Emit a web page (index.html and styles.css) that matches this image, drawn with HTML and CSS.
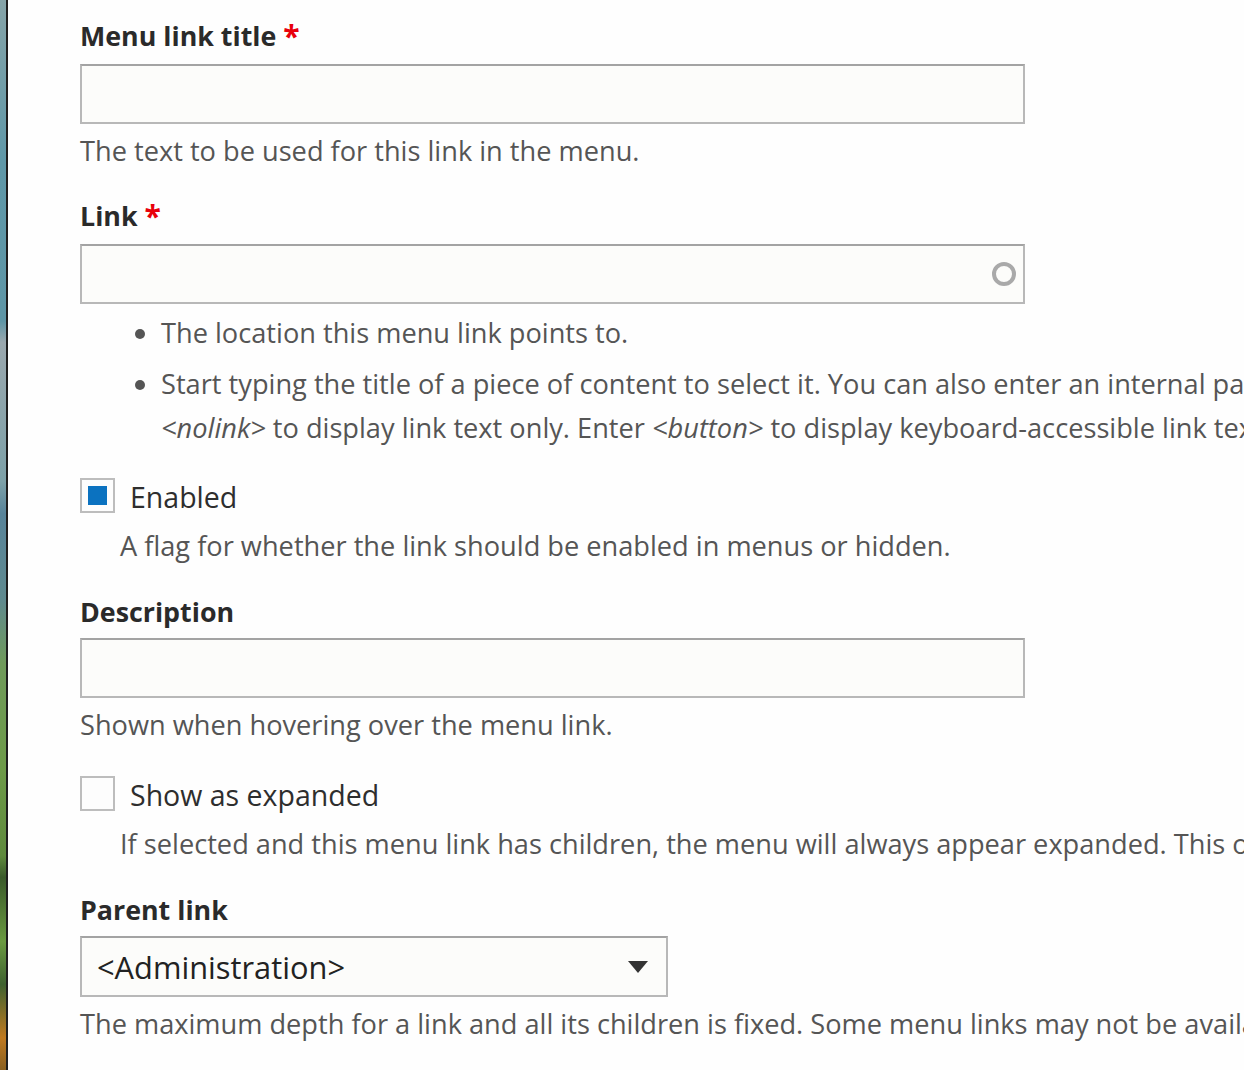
FILE: index.html
```html
<!DOCTYPE html>
<html>
<head>
<meta charset="utf-8">
<link rel="stylesheet" href="styles.css">
</head>
<body>
<div class="page">
  <div class="strip"></div>
  <main class="content">
    <div class="form-item">
      <label class="label">Menu link title <span class="req">*</span></label>
      <div class="input"></div>
      <div class="desc">The text to be used for this link in the menu.</div>
    </div>

    <div class="form-item">
      <label class="label">Link <span class="req">*</span></label>
      <div class="input input-auto">
        <svg class="spinner" width="30" height="30" viewBox="0 0 30 30"><circle cx="15" cy="15" r="10" fill="none" stroke="#a9a9a9" stroke-width="4"/></svg>
      </div>
      <ul class="bullets">
        <li>The location this menu link points to.</li>
        <li>Start typing the title of a piece of content to select it. You can also enter an internal path such as /node/add or an external URL such as http://example.com. Enter<br><em>&lt;nolink&gt;</em> to display link text only. Enter <em>&lt;button&gt;</em> to display keyboard-accessible link text only.</li>
      </ul>
    </div>

    <div class="form-item check-item">
      <div class="check-row">
        <span class="checkbox checked"><span class="tick"></span></span>
        <span class="check-label">Enabled</span>
      </div>
      <div class="desc indent">A flag for whether the link should be enabled in menus or hidden.</div>
    </div>

    <div class="form-item">
      <label class="label">Description</label>
      <div class="input input-tight"></div>
      <div class="desc">Shown when hovering over the menu link.</div>
    </div>

    <div class="form-item check-item check-item--spaced">
      <div class="check-row">
        <span class="checkbox"></span>
        <span class="check-label">Show as expanded</span>
      </div>
      <div class="desc indent">If selected and this menu link has children, the menu will always appear expanded. This option may be overridden for the entire menu tree when placing a menu block.</div>
    </div>

    <div class="form-item">
      <label class="label">Parent link</label>
      <div class="select"><span>&lt;Administration&gt;</span><span class="arrow"></span></div>
      <div class="desc">The maximum depth for a link and all its children is fixed. Some menu links may not be available as parents if selecting them would exceed this limit.</div>
    </div>
  </main>
</div>
</body>
</html>
```

FILE: styles.css
```css
html, body {
  margin: 0;
  padding: 0;
  background: #fefefe;
  overflow: hidden;
}
body {
  font-family: "Open Sans", "Noto Sans", sans-serif;
  color: #222;
}
.page {
  display: flex;
  width: 1244px;
  height: 1070px;
}
.strip {
  width: 6px;
  flex: none;
  border-right: 2px solid #1e1e1e;
  background: linear-gradient(to bottom, #86a4a8 0%, #5f98a8 15%, #5e96a6 30%, #9aa8ae 32%, #7da1a8 45%, #58849a 48%, #5f8a8f 56%, #6f9a5a 62%, #6d9a48 72%, #5f8a3d 80%, #3a5a2a 82%, #6a9a40 88%, #3f6230 92%, #c07a20 97%, #8a6020 100%);
}
.content {
  flex: 1;
  padding: 18px 0 0 72px;
  white-space: nowrap;
  overflow: hidden;
}
.form-item {
  margin-bottom: 29px;
}
.label {
  display: block;
  font-size: 26.8px;
  font-weight: 700;
  line-height: 36px;
  color: #2a2a2a;
  margin-bottom: 10px;
}
.req {
  color: #e8000b;
  font-size: 30px;
  line-height: 0;
  position: relative;
  top: 1px;
}
.input {
  box-sizing: border-box;
  width: 945px;
  height: 60px;
  border: 2px solid #b8b8b8;
  border-top-color: #a3a3a3;
  background: #fcfcfa;
}
.input-tight {
  margin-top: -2px;
  margin-bottom: 2px;
}
.input-auto {
  display: flex;
  justify-content: flex-end;
  align-items: center;
  padding-right: 4px;
}
.spinner {
  display: block;
  filter: blur(0.6px);
}
.desc {
  font-size: 27.2px;
  line-height: 36px;
  color: #555;
  margin-top: 9px;
}
.desc.indent {
  margin-left: 40px;
  margin-top: 13px;
}
.bullets {
  margin: 7px 0 -3px 0;
  padding: 0 0 0 81px;
  font-size: 27.2px;
  line-height: 44px;
  color: #555;
  list-style: disc;
}
.bullets li {
  margin-bottom: 7px;
}
.bullets li:last-child {
  margin-bottom: 0;
}
.bullets em {
  font-style: italic;
}
.check-item {
  padding-top: 2px;
  margin-bottom: 30px;
}
.check-item--spaced {
  padding-top: 4px;
}
.check-row {
  display: flex;
  align-items: flex-start;
  gap: 15px;
}
.checkbox {
  box-sizing: border-box;
  width: 35px;
  height: 35px;
  border: 2px solid #bdbdbd;
  background: #fdfdfd;
  display: flex;
  align-items: center;
  justify-content: center;
  flex: none;
}
.tick {
  width: 19px;
  height: 19px;
  background: #0b72c0;
}
.check-label {
  font-size: 28.5px;
  line-height: 36px;
  padding-top: 1px;
  color: #2e2e2e;
}
.select {
  box-sizing: border-box;
  width: 588px;
  height: 61px;
  margin-top: -2px;
  border: 2px solid #b8b8b8;
  border-top-color: #a3a3a3;
  background: #fcfcfa;
  display: flex;
  align-items: center;
  justify-content: space-between;
  padding: 0 18px 0 15px;
  font-size: 30.8px;
  color: #222;
}
.arrow {
  width: 0;
  height: 0;
  border-left: 10px solid transparent;
  border-right: 10px solid transparent;
  border-top: 12px solid #333;
}
```
